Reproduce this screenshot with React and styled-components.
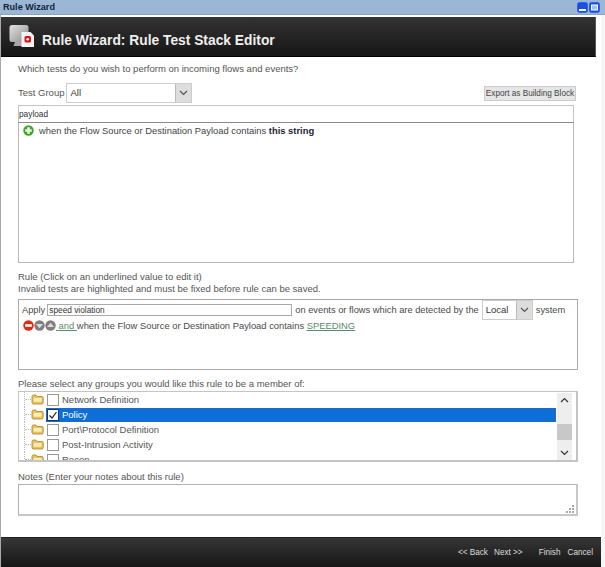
import React from 'react';
import styled, { createGlobalStyle } from 'styled-components';

const GlobalStyle = createGlobalStyle`
  html, body {
    margin: 0;
    padding: 0;
    background: #fff;
  }
  body {
    font-family: "Liberation Sans", Arial, sans-serif;
    font-size: 9.5px;
    color: #4a4a4a;
  }
`;

const Page = styled.div`
  width: 605px;
  height: 567px;
  overflow: hidden;
  display: flex;
  flex-direction: column;
  background: #f6f6f6;
`;

const TitleBar = styled.div`
  height: 14px;
  flex: none;
  display: flex;
  align-items: center;
  justify-content: space-between;
  padding: 0 5px 0 3px;
  background: #9cb7d6;
  border-bottom: 1px solid #8aa4c0;
`;

const TitleText = styled.span`
  font-size: 9.1px;
  font-weight: bold;
  color: #10233c;
`;

const WinButtons = styled.div`
  display: flex;
  gap: 1px;
`;

const Panel = styled.div`
  flex: 1;
  width: 600px;
  display: flex;
  flex-direction: column;
  background: #fff;
  border-left: 1px solid #aaa;
  padding-top: 2px;
  min-height: 0;
`;

const Header = styled.div`
  height: 40px;
  width: 595px;
  flex: none;
  display: flex;
  align-items: center;
  gap: 6px;
  padding-left: 8px;
  box-sizing: border-box;
  background: linear-gradient(#333, #161616);
  border-bottom: 1px solid #000;
  border-right: 1px solid #555;
`;

const HeaderTitle = styled.h1`
  margin: 8px 0 0;
  font-size: 13.8px;
  font-weight: bold;
  color: #eee;
`;

const Body = styled.div`
  flex: 1;
  padding: 6px 0 0 17px;
  min-height: 0;
`;

const Label = styled.div`
  line-height: 12px;
  color: #555;
`;

const GroupRow = styled.div`
  display: flex;
  align-items: center;
  justify-content: space-between;
  height: 20px;
  width: 558px;
  margin-top: 8px;
`;

const GroupLeft = styled.div`
  display: flex;
  align-items: center;
  gap: 2px;
`;

const SelectBox = styled.div`
  display: flex;
  justify-content: space-between;
  align-items: stretch;
  flex: none;
  width: ${(p) => p.$w}px;
  height: ${(p) => p.$h}px;
  box-sizing: border-box;
  border: 1px solid #ccc;
  background: #fff;
  color: #333;
`;

const SelectValue = styled.span`
  align-self: center;
  padding-left: 3px;
  padding-bottom: 1px;
`;

const SelectArrow = styled.span`
  width: 15px;
  display: flex;
  align-items: center;
  justify-content: center;
  background: #ddd;
  border-left: 1px solid #bbb;
`;

const ExportButton = styled.button`
  height: 15px;
  width: 92px;
  padding: 0;
  white-space: nowrap;
  font: 8.2px "Liberation Sans", Arial, sans-serif;
  color: #444;
  background: #e6e6e6;
  border: 1px solid #ccc;
`;

const SearchInput = styled.div`
  width: 556px;
  height: 18px;
  margin-top: 2px;
  box-sizing: border-box;
  padding-left: 0;
  line-height: 17px;
  font-size: 8.3px;
  color: #333;
  border: 1px solid #c4c4c4;
  border-bottom: 1px solid #8a8a8a;
`;

const TestList = styled.div`
  width: 556px;
  height: 140px;
  box-sizing: border-box;
  display: flex;
  align-items: flex-start;
  gap: 5px;
  padding: 2px 0 0 4px;
  border: 1px solid #b8b8b8;
  border-top: none;
  font-size: 9.4px;
  line-height: 12px;
  color: #444;
`;

const Strong = styled.b`
  color: #1c1c3a;
`;

const RuleLabels = styled.div`
  margin-top: 8px;
`;

const RuleBox = styled.div`
  width: 560px;
  height: 71px;
  margin-top: 4px;
  box-sizing: border-box;
  padding: 0 3px;
  border: 1px solid #aaa;
`;

const ApplyRow = styled.div`
  display: flex;
  align-items: center;
  gap: 3px;
  height: 20px;
  white-space: nowrap;
`;

const ApplyText = styled.span`
  font-size: 9.3px;
  padding-bottom: 1px;
`;

const NameInput = styled.div`
  width: 245px;
  height: 12px;
  flex: none;
  box-sizing: border-box;
  margin-left: -1px;
  padding-left: 1px;
  line-height: 10px;
  font-size: 8.3px;
  color: #333;
  border: 1px solid #aaa;
`;

const TestRow = styled.div`
  display: flex;
  align-items: center;
  height: 11px;
  padding-left: 1px;
  font-size: 9.4px;
  white-space: pre;
`;

const Underlined = styled.span`
  color: #5a8a6a;
  text-decoration: underline;
`;

const GroupsLabel = styled(Label)`
  margin-top: 8px;
`;

const Tree = styled.div`
  position: relative;
  width: 560px;
  height: 71px;
  margin-top: 1px;
  box-sizing: border-box;
  overflow: hidden;
  border: 1px solid #c4c4c4;
  border-bottom-width: 2px;
  border-right-width: 2px;
`;

const TreeRow = styled.div`
  height: 15px;
  margin-right: 20px;
  display: flex;
  align-items: center;
  padding-left: 5px;
  box-sizing: border-box;
`;

const RowBody = styled.div`
  flex: 1;
  height: 14px;
  margin-left: 2px;
  padding-left: 1px;
  display: flex;
  align-items: center;
  gap: 3px;
  box-sizing: border-box;
  background: ${(p) => (p.$selected ? '#0a6fd6' : 'transparent')};
  box-shadow: ${(p) => (p.$selected ? 'inset 0 0 0 1px #2a66c8' : 'none')};
`;

const RowLabel = styled.span`
  line-height: 14px;
  color: ${(p) => (p.$selected ? '#fff' : '#555')};
`;

const Connector = styled.span`
  width: 7px;
  height: 15px;
  flex: none;
  box-sizing: border-box;
  border-left: 1px dotted #bbb;
  position: relative;
  &::after {
    content: '';
    position: absolute;
    left: 0;
    top: 7px;
    width: 6px;
    border-top: 1px dotted #bbb;
  }
`;

const CheckBox = styled.span`
  width: 12px;
  height: 12px;
  flex: none;
  box-sizing: border-box;
  display: flex;
  align-items: center;
  justify-content: center;
  background: #fff;
  border: 1px solid ${(p) => (p.$selected ? '#123a7a' : '#999')};
`;

const Scrollbar = styled.div`
  position: absolute;
  top: 1px;
  right: 4px;
  bottom: 0;
  width: 15px;
  display: flex;
  flex-direction: column;
  justify-content: space-between;
  align-items: center;
  padding: 4px 0;
  box-sizing: border-box;
  background: #eee;
`;

const Thumb = styled.div`
  position: absolute;
  top: 31px;
  left: 0;
  width: 15px;
  height: 16px;
  background: #c8c8c8;
`;

const NotesLabel = styled(Label)`
  margin-top: 9px;
`;

const Notes = styled.div`
  position: relative;
  width: 560px;
  height: 32px;
  margin-top: 1px;
  box-sizing: border-box;
  border: 1px solid #b0b0b0;
  border-bottom: 2px solid #c8c8c8;
  border-right: 2px solid #c8c8c8;
`;

const Grip = styled.svg`
  position: absolute;
  right: 1px;
  bottom: 1px;
`;

const Footer = styled.div`
  height: 30px;
  flex: none;
  display: flex;
  align-items: center;
  justify-content: flex-end;
  padding-right: 8px;
  box-sizing: border-box;
  background: linear-gradient(#363636, #161616);
  border-top: 1px solid #222;
`;

const FooterLink = styled.a`
  margin-left: ${(p) => p.$gap || 0}px;
  font-size: 8.2px;
  color: #ddd;
`;

const Chevron = ({ up, color = '#555' }) => (
  <svg width="9" height="6" viewBox="0 0 9 6">
    <path d={up ? 'M1 5 L4.5 1.5 L8 5' : 'M1 1 L4.5 4.5 L8 1'} fill="none" stroke={color} strokeWidth="1.2" />
  </svg>
);

const WinButton = ({ max }) => (
  <svg width="11" height="11" viewBox="0 0 11 11">
    <rect x="0.5" y="0.5" width="10" height="10" rx="2" fill="#1a4fe0" stroke="#2b63ee" />
    {max ? (
      <rect x="2.5" y="3" width="6" height="5" fill="#9cc4f5" stroke="#fff" />
    ) : (
      <rect x="2" y="7" width="7" height="2" fill="#fff" />
    )}
  </svg>
);

const Round = ({ fill, children }) => (
  <svg width="11" height="11" viewBox="0 0 11 11" style={{ flex: 'none' }}>
    <circle cx="5.5" cy="5.5" r="5.2" fill={fill} />
    {children}
  </svg>
);

const PlusIcon = () => (
  <Round fill="#3fa52c">
    <path d="M4.2 2.2h2.6v2h2v2.6h-2v2H4.2v-2h-2V4.2h2z" fill="#e8f8e0" />
  </Round>
);

const MinusIcon = () => (
  <Round fill="#e02a12">
    <rect x="2.2" y="4.2" width="6.6" height="2.6" fill="#fff" />
  </Round>
);

const ArrowIcon = ({ up }) => (
  <Round fill="#7f7f7f">
    <path d={up ? 'M5.5 2.8 L9 7 H2z' : 'M5.5 8.2 L9 4 H2z'} fill="#ddd" />
  </Round>
);

const Folder = () => (
  <svg width="13" height="11" viewBox="0 0 13 11" style={{ flex: 'none' }}>
    <path d="M1 2.5 Q1 1 2.5 1 H5 L6 2.5 H11 Q12.2 2.5 12.2 4 V8.5 Q12.2 10 11 10 H2.5 Q1 10 1 8.5z" fill="#e9c25a" stroke="#a8862e" strokeWidth="0.8" />
    <rect x="2.5" y="4" width="8.2" height="3.8" rx="1" fill="#fbeeb8" />
  </svg>
);

const Tick = () => (
  <svg width="10" height="10" viewBox="0 0 10 10">
    <path d="M1.5 5.5 L4 8 L8.5 2" fill="none" stroke="#222" strokeWidth="1.2" />
  </svg>
);

const WizardIcon = () => (
  <svg width="27" height="26" viewBox="0 0 27 26" style={{ flex: 'none', marginTop: '1px' }}>
    <defs>
      <linearGradient id="screen" x1="0" y1="0" x2="1" y2="1">
        <stop offset="0" stopColor="#e4e4e4" />
        <stop offset="1" stopColor="#8a8a8a" />
      </linearGradient>
    </defs>
    <rect x="0.5" y="1" width="19" height="17" rx="2.5" fill="url(#screen)" />
    <path d="M6 18h8l1.5 4h-11z" fill="#a8a8a8" />
    <path d="M12.5 8 h9 l3.5 3.5 V23 h-12.5z" fill="#f4f4f4" />
    <rect x="15.5" y="12" width="6.5" height="6.5" rx="1.5" fill="#e0121a" />
    <circle cx="18.7" cy="15.2" r="1.3" fill="#fff" />
  </svg>
);

const GROUPS = [
  { name: 'Network Definition' },
  { name: 'Policy', selected: true, checked: true },
  { name: 'Port\\Protocol Definition' },
  { name: 'Post-Intrusion Activity' },
  { name: 'Recon' },
];

const App = () => {
  return (
    <Page>
      <GlobalStyle />
      <TitleBar>
        <TitleText>Rule Wizard</TitleText>
        <WinButtons>
          <WinButton />
          <WinButton max />
        </WinButtons>
      </TitleBar>
      <Panel>
        <Header>
          <WizardIcon />
          <HeaderTitle>Rule Wizard: Rule Test Stack Editor</HeaderTitle>
        </Header>
        <Body>
          <Label>Which tests do you wish to perform on incoming flows and events?</Label>
          <GroupRow>
            <GroupLeft>
              <Label>Test Group</Label>
              <SelectBox $w={126} $h={20}>
                <SelectValue>All</SelectValue>
                <SelectArrow><Chevron /></SelectArrow>
              </SelectBox>
            </GroupLeft>
            <ExportButton>Export as Building Block</ExportButton>
          </GroupRow>
          <SearchInput>payload</SearchInput>
          <TestList>
            <PlusIcon />
            <span>when the Flow Source or Destination Payload contains <Strong>this string</Strong></span>
          </TestList>
          <RuleLabels>
            <Label>Rule (Click on an underlined value to edit it)</Label>
            <Label>Invalid tests are highlighted and must be fixed before rule can be saved.</Label>
          </RuleLabels>
          <RuleBox>
            <ApplyRow>
              <ApplyText>Apply</ApplyText>
              <NameInput>speed violation</NameInput>
              <ApplyText>on events or flows which are detected by the</ApplyText>
              <SelectBox $w={51} $h={20}>
                <SelectValue>Local</SelectValue>
                <SelectArrow><Chevron /></SelectArrow>
              </SelectBox>
              <ApplyText>system</ApplyText>
            </ApplyRow>
            <TestRow>
              <MinusIcon />
              <ArrowIcon />
              <ArrowIcon up />
              <Underlined> and </Underlined>
              <span>when the Flow Source or Destination Payload contains </span>
              <Underlined>SPEEDING</Underlined>
            </TestRow>
          </RuleBox>
          <GroupsLabel>Please select any groups you would like this rule to be a member of:</GroupsLabel>
          <Tree>
            {GROUPS.map((g) => (
              <TreeRow key={g.name}>
                <Connector />
                <Folder />
                <RowBody $selected={g.selected}>
                  <CheckBox $selected={g.selected}>{g.checked && <Tick />}</CheckBox>
                  <RowLabel $selected={g.selected}>{g.name}</RowLabel>
                </RowBody>
              </TreeRow>
            ))}
            <Scrollbar>
              <Chevron up color="#333" />
              <Thumb />
              <Chevron color="#333" />
            </Scrollbar>
          </Tree>
          <NotesLabel>Notes (Enter your notes about this rule)</NotesLabel>
          <Notes>
            <Grip width="9" height="9" viewBox="0 0 9 9">
              <path d="M6 1h2v2H6zM3 4h2v2H3zM6 4h2v2H6zM0 7h2v2H0zM3 7h2v2H3zM6 7h2v2H6z" fill="#aaa" />
            </Grip>
          </Notes>
        </Body>
        <Footer>
          <FooterLink>&lt;&lt; Back</FooterLink>
          <FooterLink $gap={6}>Next &gt;&gt;</FooterLink>
          <FooterLink $gap={16}>Finish</FooterLink>
          <FooterLink $gap={7}>Cancel</FooterLink>
        </Footer>
      </Panel>
    </Page>
  );
};

export default App;
